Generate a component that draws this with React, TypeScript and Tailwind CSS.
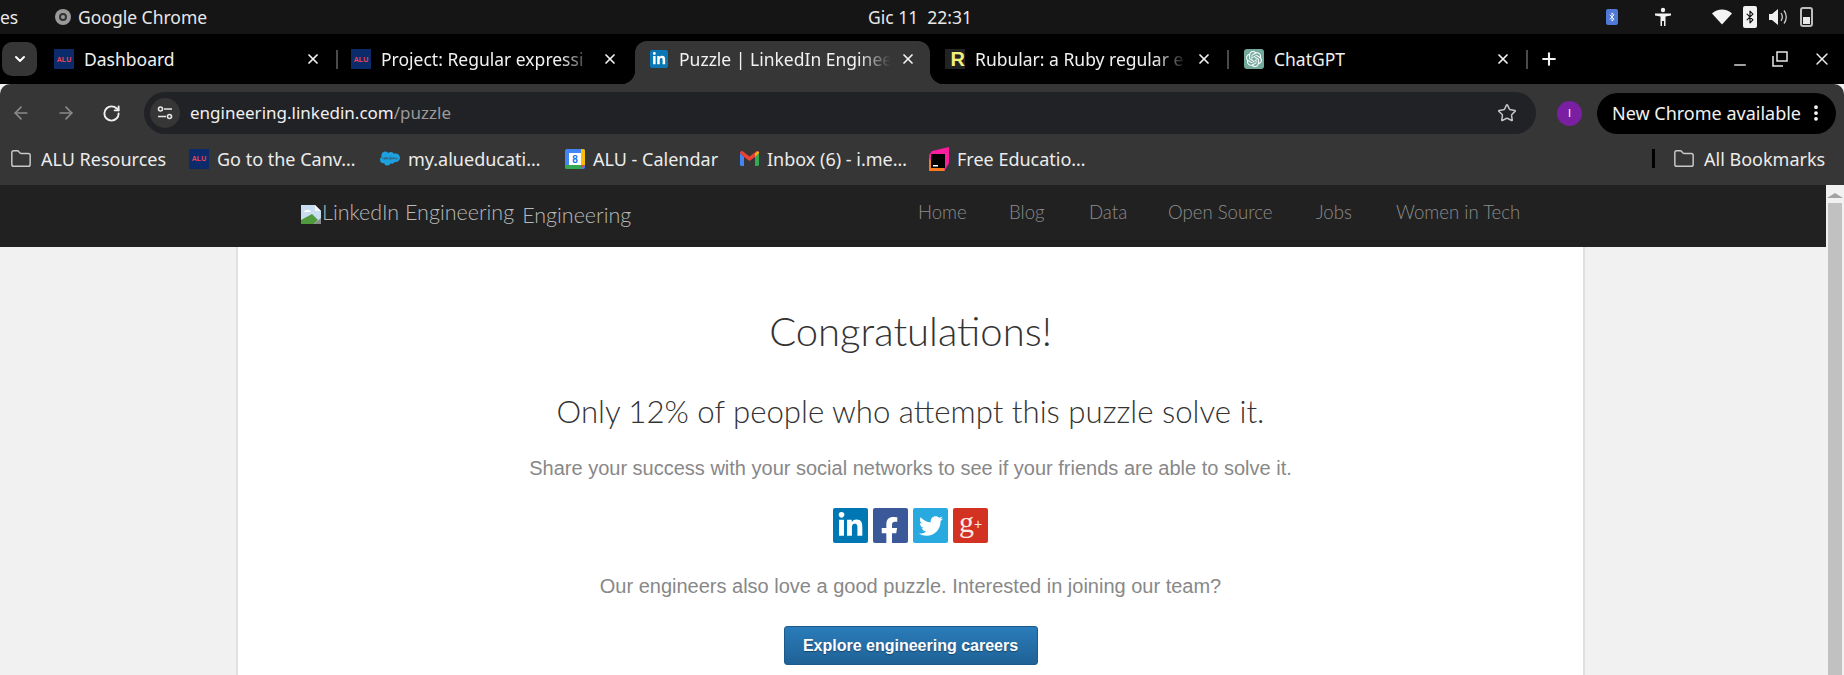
import React from "react";
import { ArrowLeft, ArrowRight, RotateCw, Star, X, Plus, Minus, EllipsisVertical, Folder, ChevronDown, Bluetooth } from "lucide-react";
import { FaLinkedinIn, FaFacebookF, FaTwitter, FaSalesforce } from "react-icons/fa";
import { SiOpenai } from "react-icons/si";

const ui = "font-['Noto_Sans',sans-serif]";

function Alu() {
  return (
    <span className="flex h-5 w-5 shrink-0 items-center justify-center bg-[#0b2b6b] font-['Liberation_Sans',sans-serif] text-[7px] font-bold leading-none text-[#ee4455]">
      ALU
    </span>
  );
}

function LinkedInFav() {
  return (
    <span className="flex h-[18px] w-[18px] shrink-0 items-center justify-center rounded-[2px] bg-[#0a78b5] text-white">
      <FaLinkedinIn size={14} />
    </span>
  );
}

function RubularFav() {
  return (
    <span className="flex h-5 w-5 shrink-0 items-end justify-end bg-[#222222] font-['Liberation_Sans',sans-serif] text-[20px] font-bold leading-[20px] text-[#f4ee7a]">
      R
    </span>
  );
}

function GptFav() {
  return (
    <span className="flex h-5 w-5 shrink-0 items-center justify-center rounded-[3px] bg-[#74aa9c] text-white">
      <SiOpenai size={16} />
    </span>
  );
}

function Tab({ icon, title, active, divider, fade, last }: { icon: React.ReactNode; title: string; active?: boolean; divider?: boolean; fade?: boolean; last?: boolean }) {
  return (
    <div className={`relative flex h-[50px] shrink-0 items-center ${last ? "ml-[2px] w-[297px]" : "w-[297px]"}`}>
      <div className="relative flex h-[43px] w-[290px] items-center self-end pb-[7px]">
        {active && (
          <span className="absolute -left-[2px] -right-[3px] bottom-0 top-0 rounded-t-[12px] bg-[#363636]">
            <span className="absolute bottom-0 -left-[14px] h-[14px] w-[14px] bg-[radial-gradient(circle_at_0_0,#000_14px,#363636_14.5px)]" />
            <span className="absolute -right-[14px] bottom-0 h-[14px] w-[14px] bg-[radial-gradient(circle_at_100%_0,#000_14px,#363636_14.5px)]" />
          </span>
        )}
        <span className={`relative ${active ? "ml-[12px]" : "ml-[11px]"} flex w-5 justify-center`}>{icon}</span>
        <span
          className={`relative ml-[10px] w-[212px] overflow-hidden whitespace-nowrap text-[17.5px] leading-6 text-[#f1f1f1] ${fade ? "[mask-image:linear-gradient(to_right,#000_85%,transparent_100%)]" : ""}`}
        >
          {title}
        </span>
        <X size={16} strokeWidth={2.6} className="relative ml-[9px] shrink-0 text-[#f1f1f1]" />
      </div>
      {divider && <span className="absolute right-[2px] top-[16px] h-[19px] w-[2px] bg-[#4a4a4a]" />}
    </div>
  );
}

function Bookmark({ icon, label, width, labelClass }: { icon: React.ReactNode; label: string; width: string; labelClass?: string }) {
  return (
    <div className={`flex shrink-0 items-center gap-2 ${width}`}>
      <span className="flex w-5 justify-center">{icon}</span>
      <span className={`whitespace-nowrap text-[18px] leading-6 text-[#ececec] ${labelClass ?? ""}`}>{label}</span>
    </div>
  );
}

function Calendar() {
  return (
    <svg width="20" height="20" viewBox="0 0 20 20">
      <rect width="20" height="20" rx="2" fill="#4285f4" />
      <rect x="4" y="4" width="12" height="12" fill="#fff" />
      <path d="M16 0h2a2 2 0 0 1 2 2v14h-4z" fill="#fbbc04" />
      <path d="M0 16h16v4H2a2 2 0 0 1-2-2z" fill="#34a853" />
      <path d="M16 16h4l-4 4z" fill="#ea4335" />
      <text x="10" y="14" textAnchor="middle" fontSize="10" fontWeight="700" fill="#1a73e8" fontFamily="Liberation Sans">8</text>
    </svg>
  );
}

function Gmail() {
  return (
    <svg width="19" height="15" viewBox="0 0 19 15">
      <path d="M0 2v11.500A1.500 1.500 0 0 0 1.500 15H4V6z" fill="#4285f4" />
      <path d="M15 6v9h2.500a1.500 1.500 0 0 0 1.500-1.500V2z" fill="#34a853" />
      <path d="M0 2C0 .4 1.800-.5 3 .5l6.500 5L16 .5c1.200-1 3-.1 3 1.500L15 6 9.500 10 4 6z" fill="#ea4335" />
      <path d="M15 6l4-4c0-1-.6-1.700-1-1.800L15 2.500z" fill="#fbbc04" />
    </svg>
  );
}

function JetBrains() {
  return (
    <svg width="20" height="24" viewBox="0 0 20 24">
      <path d="M3 4 20 0v16l-4 7-16 1V8z" fill="#fb1f9f" />
      <path d="M0 12v12h16l-2-4z" fill="#fb7a1f" />
      <rect x="2" y="7" width="14" height="14" fill="#000" />
      <rect x="4" y="18" width="5" height="1.500" fill="#fff" />
    </svg>
  );
}

function Social({ bg, children }: { bg: string; children: React.ReactNode }) {
  return <span className={`flex h-[35px] w-[35px] rounded-[2px] text-white ${bg}`}>{children}</span>;
}

function BrokenImage() {
  return (
    <svg width="20" height="19" viewBox="0 0 20 19" className="shrink-0 -translate-y-[1px]">
      <path d="M0 0h14l6 6v13H0z" fill="#c8ddf0" />
      <path d="M14 0l6 6h-6z" fill="#f5f5f5" />
      <path d="M3 7c1-3 6-3 7 0z" fill="#fff" />
      <path d="M0 19v-4l11-6 6 6-4 4z" fill="#4f9a3d" />
      <path d="M13 19l7-6v6z" fill="#8a8a8a" />
    </svg>
  );
}

const nav: [string, string][] = [
  ["Home", "w-[91px]"],
  ["Blog", "w-[80px]"],
  ["Data", "w-[79px]"],
  ["Open Source", "w-[148px]"],
  ["Jobs", "w-[80px]"],
  ["Women in Tech", "w-[123px]"],
];

export default function App() {
  return (
    <div className={`flex h-[675px] w-[1844px] flex-col overflow-hidden bg-[#f1f1f1] ${ui}`}>
      {/* system bar */}
      <div className="flex h-[34px] shrink-0 items-center bg-[#151515] text-[17.5px] text-[#e8e8e8]">
        <span className="w-[55px]">es</span>
        <span className="flex h-4 w-4 items-center justify-center rounded-full bg-[#9a9a9a]">
          <span className="h-2 w-2 rounded-full border-2 border-[#333]" />
        </span>
        <span className="ml-[7px] w-[790px]">Google Chrome</span>
        <span className="w-[738px] whitespace-pre">Gic 11  22:31</span>
        <span className="flex h-4 w-3 items-center justify-center rounded-[2px] bg-[#4f78d8] text-white">
          <Bluetooth size={10} />
        </span>
        <svg width="18" height="20" viewBox="0 0 18 20" className="ml-[36px]" fill="#f2f2f2">
          <circle cx="9" cy="3" r="2.200" />
          <path d="M1 6.500h16v2l-5.500 1V19H10v-5H8v5H6.500V9.500L1 8.500z" />
        </svg>
        <svg width="20" height="16" viewBox="0 0 20 16" className="ml-[40px]" fill="#f4f4f4">
          <path d="M0 4.500C5.500-1 14.500-1 20 4.500L10 15.500z" />
        </svg>
        <span className="ml-[11px] flex h-[22px] w-[14px] items-center justify-center rounded-[2px] bg-[#f2f2f2] text-[#111]">
          <Bluetooth size={14} />
        </span>
        <svg width="20" height="20" viewBox="0 0 20 20" className="ml-[11px]">
          <path d="M1 7h3l6-5v16l-6-5H1z" fill="#eeeeee" />
          <path d="M13 6c1.600 2.400 1.600 5.600 0 8M16 3.500c3 3.800 3 9.200 0 13" fill="none" stroke="#cccccc" strokeWidth="1.300" />
        </svg>
        <span className="relative ml-[12px] h-5 w-[13px] rounded-[3px] border-2 border-[#bdbdbd]">
          <span className="absolute inset-x-[1px] bottom-[1px] h-[7px] bg-[#e8e8e8]" />
        </span>
      </div>

      {/* tab strip */}
      <div className="flex h-[50px] shrink-0 items-center bg-black">
        <span className="ml-[2px] flex h-[34px] w-[35px] items-center justify-center rounded-[10px] bg-[#363636] text-white">
          <ChevronDown size={16} strokeWidth={3} />
        </span>
        <div className="ml-[6px] flex">
          <Tab icon={<Alu />} title="Dashboard" divider />
          <Tab icon={<Alu />} title="Project: Regular expressi" fade />
          <Tab icon={<LinkedInFav />} title="Puzzle | LinkedIn Enginee" active fade />
          <Tab icon={<RubularFav />} title="Rubular: a Ruby regular e" divider fade />
          <Tab icon={<GptFav />} title="ChatGPT" divider last />
        </div>
        <Plus size={20} strokeWidth={2.5} className="ml-[9px] text-[#f4f4f4]" />
        <Minus size={18} className="ml-[172px] translate-y-[6px] text-[#d8d8d8]" />
        <svg width="16" height="16" viewBox="0 0 16 16" className="ml-[23px]" fill="none" stroke="#e6e6e6" strokeWidth="1.500">
          <rect x="5" y="1" width="10" height="9" />
          <path d="M1 5v10h10" />
        </svg>
        <X size={20} strokeWidth={1.7} className="ml-[24px] text-[#eeeeee]" />
      </div>

      {/* toolbar */}
      <div className="flex h-[50px] shrink-0 items-end rounded-t-[10px] bg-[#363636]">
        <div className="flex h-[42px] items-center">
          <ArrowLeft size={20} className="ml-[11px] text-[#8a8a8a]" />
          <ArrowRight size={20} className="ml-[25px] text-[#8a8a8a]" />
          <RotateCw size={19} strokeWidth={2.4} className="ml-[26px] text-[#efefef]" />
        </div>
        <div className="ml-[23px] flex h-[42px] w-[1392px] items-center rounded-full bg-[#212226]">
          <span className="ml-[6px] flex h-[30px] w-[30px] items-center justify-center rounded-full bg-[#363636]">
            <svg width="16" height="14" viewBox="0 0 16 14" fill="none" stroke="#e6e6e6" strokeWidth="1.600">
              <circle cx="3.500" cy="3" r="2" />
              <path d="M7 3h8M1 10.500h8" />
              <circle cx="12.500" cy="10.500" r="2" />
            </svg>
          </span>
          <span className="ml-[10px] text-[17px] leading-6 text-[#f0f0f0]">
            engineering.linkedin.com<span className="text-[#9a9a9a]">/puzzle</span>
          </span>
          <Star size={20} strokeWidth={1.8} className="ml-auto mr-[19px] text-[#c4c4c4]" />
        </div>
        <div className="flex h-[42px] items-center">
          <span className="ml-[21px] flex h-[25px] w-[25px] items-center justify-center rounded-full bg-[#7b1fa2] font-['Liberation_Sans',sans-serif] text-[11px] text-white">I</span>
          <span className="ml-[15px] flex h-[41px] w-[239px] items-center whitespace-nowrap rounded-full bg-black pl-[15px] text-[18px] text-[#f2f2f2]">
            New Chrome available
            <EllipsisVertical size={20} strokeWidth={2.5} className="ml-auto mr-[10px] text-white" />
          </span>
        </div>
      </div>

      {/* bookmarks */}
      <div className="flex h-[51px] shrink-0 items-center bg-[#363636] pl-[11px] pb-[2px]">
        <Bookmark icon={<Folder size={22} strokeWidth={1.6} className="shrink-0 text-[#c9c9c9]" />} label="ALU Resources" width="w-[178px]" labelClass="ml-[2px]" />
        <Bookmark icon={<Alu />} label="Go to the Canv…" width="w-[191px]" />
        <Bookmark icon={<FaSalesforce size={21} className="text-[#1ea1e0]" />} label="my.alueducati…" width="w-[185px]" />
        <Bookmark icon={<Calendar />} label="ALU - Calendar" width="w-[174px]" />
        <Bookmark icon={<Gmail />} label="Inbox (6) - i.me…" width="w-[190px]" />
        <Bookmark icon={<JetBrains />} label="Free Educatio…" width="w-[723px]" />
        <span className="h-[19px] w-[3px] bg-black" />
        <Bookmark icon={<Folder size={22} strokeWidth={1.6} className="shrink-0 text-[#c9c9c9]" />} label="All Bookmarks" width="ml-[19px]" labelClass="ml-[2px]" />
      </div>

      {/* page */}
      <div className="flex min-h-0 flex-1">
        <div className="flex min-w-0 flex-1 flex-col">
          <header className="flex h-[62px] shrink-0 items-center bg-[#212121] pb-[2px] font-['Lato',sans-serif] font-light">
            <div className="ml-[301px] flex w-[617px] items-center">
              <BrokenImage />
              <span className="ml-[1px] -translate-y-[3px] whitespace-nowrap text-[21.5px] text-[#b9b9b9]">LinkedIn Engineering</span>
              <span className="ml-[8px] text-[21.5px] text-[#b9b9b9]">Engineering</span>
            </div>
            <nav className="flex -translate-y-[2px] text-[18.6px] text-[#8c8c8c]">
              {nav.map(([n, w]) => (
                <span key={n} className={`whitespace-nowrap ${w}`}>
                  {n}
                </span>
              ))}
            </nav>
          </header>
          <main className="ml-[236px] flex min-h-0 w-[1349px] flex-1 flex-col items-center overflow-hidden border-x-2 border-[#e0e0e0] bg-white">
            <h1 className="mt-[58px] font-['Lato',sans-serif] text-[40px] font-light leading-[52px] text-[#333333]">Congratulations!</h1>
            <h2 className="mt-[34px] font-['Lato',sans-serif] text-[31.2px] font-light leading-[40px] text-[#333333]">
              Only 12% of people who attempt this puzzle solve it.
            </h2>
            <p className="mt-[23px] font-['Liberation_Sans',sans-serif] text-[20px] leading-[28px] text-[#888888]">
              Share your success with your social networks to see if your friends are able to solve it.
            </p>
            <div className="mt-[26px] flex gap-[5px]">
              <Social bg="bg-[#0077b5] items-center justify-center"><FaLinkedinIn size={27} /></Social>
              <Social bg="overflow-hidden bg-[#3b5998] items-end justify-end"><FaFacebookF size={29} className="translate-x-[-4px] translate-y-[3px]" /></Social>
              <Social bg="bg-[#28aae1] items-center justify-center"><FaTwitter size={24} /></Social>
              <Social bg="bg-[#d33222] items-center justify-start">
                <span className="ml-[6px] -translate-y-[4px] font-['Liberation_Serif',serif] text-[30px] leading-[35px] text-[#fbe9e6]">g</span>
                <span className="-translate-y-[2px] font-['Liberation_Sans',sans-serif] text-[14px] leading-[20px] text-[#fbe9e6]">+</span>
              </Social>
            </div>
            <p className="mt-[29px] font-['Liberation_Sans',sans-serif] text-[20px] leading-[28px] text-[#888888]">
              Our engineers also love a good puzzle. Interested in joining our team?
            </p>
            <button className="mt-[26px] flex h-[39px] w-[254px] shrink-0 items-center justify-center rounded-[3px] border border-[#1d5a8c] bg-gradient-to-b from-[#2a7cba] to-[#1f6296] font-['Liberation_Sans',sans-serif] text-[16px] font-bold text-white [text-shadow:0_1px_1px_rgba(0,0,0,0.35)]">
              Explore engineering careers
            </button>
          </main>
        </div>
        <div className="flex w-[18px] shrink-0 flex-col items-center bg-[#f1f1f1]">
          <span className="mt-[8px] h-0 w-0 border-x-[8px] border-b-[5px] border-x-transparent border-b-[#a3a3a3]" />
          <span className="mt-[5px] w-[14px] flex-1 bg-[#c1c1c1]" />
        </div>
      </div>
    </div>
  );
}
